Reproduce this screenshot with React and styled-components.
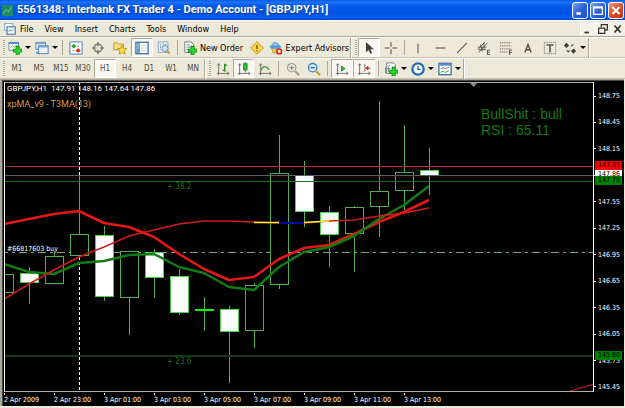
import React, { useState } from 'react';
import styled, { createGlobalStyle } from 'styled-components';

const GlobalStyle = createGlobalStyle`
  * {
    box-sizing: border-box;
  }
  body {
    margin: 0;
    background: #ece9d8;
    font-family: 'DejaVu Sans Condensed', 'Noto Sans', sans-serif;
    font-size: 9px;
    color: #000;
  }
  button {
    margin: 0;
    padding: 0;
    border: none;
    background: none;
    font: inherit;
    color: inherit;
  }
`;

const Window = styled.div`
  display: flex;
  flex-direction: column;
  min-width: 600px;
`;

const TitleBar = styled.header`
  display: flex;
  align-items: center;
  gap: 4px;
  height: 20px;
  padding: 0 1px 0 2px;
  background: linear-gradient(#0a5ce0, #1a72fb 12%, #0458ea 30%, #0053e1 70%, #0560f5 88%, #0142b8);
`;

const Title = styled.h1`
  flex: 1;
  margin: 0;
  font-family: Roboto, 'Noto Sans', sans-serif;
  font-size: 11px;
  line-height: 16px;
  font-weight: 700;
  color: #fff;
  white-space: nowrap;
  text-shadow: 1px 1px 0 #0a3c9c;
`;

const WindowButtons = styled.div`
  display: flex;
  gap: 2px;
`;

const WindowButton = styled.button`
  display: flex;
  width: 16px;
  height: 17px;
  border: 1px solid #fff;
  border-radius: 3px;
  background: ${({ $close }) =>
    $close
      ? 'linear-gradient(135deg, #ef9b7f, #dd4f26 50%, #b93411)'
      : 'linear-gradient(135deg, #7ba4f4, #2c62dd 50%, #1c4bc4)'};
`;

const MenuBar = styled.nav`
  display: flex;
  align-items: center;
  height: 17px;
  padding-left: 4px;
  border-top: 1px solid #fff;
  border-bottom: 1px solid #aca899;
`;

const MenuItems = styled.div`
  display: flex;
  flex: 1;
  gap: 11px;
  padding-left: 4px;
`;

const MenuItem = styled.button`
  font-size: 9px;
  line-height: 14px;
`;

const ChildButton = styled.button`
  display: flex;
  width: 15px;
  height: 13px;
  border-left: 1px solid #fff;
  background: #f4f2e8;
`;

const ToolBar = styled.div`
  display: flex;
  align-items: center;
  height: 21px;
  border-top: 1px solid #fff;
  border-bottom: 1px solid #c5c2b2;
`;

const Grip = styled.span`
  width: 6px;
  height: 16px;
  border-left: 3px solid transparent;
  background: repeating-linear-gradient(#a5a293 0 1px, #f6f4ea 1px 2px) no-repeat 0 0 / 2px 100%;
`;

const Separator = styled.span`
  display: flex;
  justify-content: center;
  width: ${({ $wide }) => ($wide ? 7 : 5)}px;
  height: 15px;
  &::before {
    content: '';
    width: 1px;
    background: #aca899;
  }
`;

const BarEnd = styled.span`
  width: 2px;
  height: 20px;
  border-left: 1px solid #aca899;
  border-right: 1px solid #fff;
`;

const ToolButton = styled.button`
  display: flex;
  align-items: center;
  justify-content: center;
  gap: 3px;
  flex: none;
  width: ${({ $width }) => $width || 22}px;
  height: 19px;
  white-space: nowrap;
  font-size: ${({ $muted }) => ($muted ? 8 : 9)}px;
  color: ${({ $muted }) => ($muted ? '#4c4b44' : '#000')};
  border: 1px solid transparent;
  &[aria-pressed='true'] {
    background: #f8f7f2;
    border-color: #aca899 #fff #fff #aca899;
  }
`;

const Caret = styled.span`
  border: 3px solid transparent;
  border-top-color: #000;
  border-bottom: none;
`;

const ChartFrame = styled.main`
  display: grid;
  grid-template-columns: 1fr 30px;
  margin-right: 1px;
  padding-left: 2px;
  background: #000;
  border: solid #aca899;
  border-width: 1px 0 0 2px;
  box-shadow: inset 1px 1px 0 #4c4b45;
  color: #fff;
  font-size: 7px;
`;

const Plot = styled.svg`
  display: block;
  width: 100%;
  height: 312px;
  margin-top: 1px;
`;

const PriceAxis = styled.div`
  position: relative;
  display: flex;
  flex-direction: column;
  justify-content: space-between;
  height: 312px;
  padding-top: 11px;
`;

const Price = styled.span`
  display: flex;
  align-items: center;
  gap: 2px;
  height: 10px;
  line-height: 10px;
  &::before {
    content: '';
    width: 2px;
    height: 1px;
    background: #fff;
  }
`;

// tags float over the scale at the height of their line
const PriceTag = styled.span`
  position: absolute;
  left: 1px;
  width: 27px;
  padding-left: 3px;
  line-height: 9px;
  background: ${({ $color }) => $color};
  color: #000;
`;

const TimeAxis = styled.div`
  display: flex;
  grid-column: 1 / -1;
  height: 13px;
  overflow: hidden;
`;

const Time = styled.span`
  flex: none;
  width: 50px;
  line-height: 10px;
  white-space: nowrap;
  &::before {
    content: '';
    display: block;
    width: 1px;
    height: 2px;
    background: #fff;
  }
`;

const Icon = ({ size = 14, children }) => (
  <svg width={size} height={size} viewBox="0 0 16 16" fill="none" aria-hidden="true">
    {children}
  </svg>
);

const Plus = () => (
  <>
    <path d="M11 5.500v10.500M5.500 11h10.500" stroke="#0f8a0f" strokeWidth="4.500" />
    <path d="M11 6.500v9M6.500 11h9" stroke="#2fd62f" strokeWidth="2.600" />
  </>
);

const icons = {
  newChart: (
    <>
      <rect x="1" y="1.500" width="11" height="9" fill="#fff" stroke="#5b87b5" />
      <path d="M1 2.500h11" stroke="#5b87b5" strokeWidth="2" />
      <path d="M3 8l2-3 2 2 3-2" stroke="#6aa66a" />
      <Plus />
    </>
  ),
  profiles: (
    <>
      <rect x="1" y="1.500" width="11" height="8" fill="#dbe8f6" stroke="#5b87b5" />
      <rect x="4" y="5.500" width="11" height="9" fill="#e9f2fb" stroke="#4676a8" />
      <path d="M4 6.500h11M1 2.500h11" stroke="#7ba2cc" strokeWidth="2" />
      <path d="M2 12v2.500h3" stroke="#4676a8" />
    </>
  ),
  market: (
    <>
      <rect x="1" y="1" width="14" height="14" rx="1" fill="#fff" stroke="#6d9cc8" strokeWidth="1.500" />
      <path d="M5.500 3l3 3-3 2.500-3-2.500z" fill="#2d9d2d" />
      <path d="M10.500 8l3 3-3 2.500-3-2.500z" fill="#d52c1c" />
      <path d="M9 6h2.500M4.500 11H7" stroke="#9a9a9a" />
    </>
  ),
  target: (
    <>
      <circle cx="8" cy="8" r="4.500" stroke="#77766e" strokeWidth="1.500" />
      <path d="M8 1v5M8 10v5M1 8h5M10 8h5" stroke="#65645e" strokeWidth="1.400" />
    </>
  ),
  folderStar: (
    <>
      <path d="M1 10V2h4l1 1.500h6V10z" fill="#f6dc7b" stroke="#b99531" />
      <path d="M10.500 5l1.600 3.300 3.600.500-2.600 2.500.700 3.600-3.300-1.700L7.200 15l.700-3.700-2.600-2.500 3.600-.500z" fill="#ffe14d" stroke="#b48a14" />
    </>
  ),
  navigator: (
    <>
      <rect x="1" y="1.500" width="14" height="13" fill="#fff" stroke="#3e6ea6" strokeWidth="1.500" />
      <rect x="2" y="2.500" width="3.500" height="11" fill="#5a91d0" />
      <path d="M7 5h7M7 8h7M7 11h7" stroke="#b8c9dc" />
      <path d="M3 5h1.500M3 8h1.500" stroke="#fff" />
    </>
  ),
  tester: (
    <>
      <rect x="1.500" y="1" width="11" height="12" fill="#eaf1f8" stroke="#86a5c3" />
      <path d="M4 3v7M7 3v5M10 3v5" stroke="#8095aa" strokeDasharray="2 1" />
      <circle cx="9" cy="8.500" r="3.500" fill="#cfe5f7" stroke="#618bb0" />
      <path d="M11.500 11l3 3.500" stroke="#c59632" strokeWidth="2" />
    </>
  ),
  order: (
    <>
      <path d="M2 1h7l3 3v9H2z" fill="#fff" stroke="#65747f" />
      <path d="M4 4.500h4M4 7h6M4 9.500h3" stroke="#687782" />
      <Plus />
    </>
  ),
  alert: (
    <>
      <path d="M8 .8L15.200 8 8 15.200.8 8z" fill="#f8d749" stroke="#b28d19" strokeLinejoin="round" />
      <path d="M8 4.500v4.500M8 10.500v1.500" stroke="#6e5309" strokeWidth="1.600" />
    </>
  ),
  expert: (
    <>
      <path d="M3 8h9l-1 5.500H5z" fill="#f3cc56" stroke="#b18928" />
      <ellipse cx="7.500" cy="6.500" rx="7" ry="2.500" fill="#5aa2d8" />
      <path d="M3.500 6c0-6 8-6 8 0z" fill="#8cc6ec" stroke="#468abd" />
      <rect x="8.500" y="8.500" width="7" height="7" rx="2" fill="#d6281c" />
      <rect x="10.500" y="10.500" width="3" height="3" fill="#fff" />
    </>
  ),
  cursor: <path d="M4.500 1v12l3-2.800 2 4.500 2-.900-2-4.300h4z" fill="#3f3e39" />,
  cross: <path d="M8 1v5.500M8 9.500V15M1 8h5.500M9.500 8H15" stroke="#55544d" strokeWidth="1.200" />,
  vline: <path d="M8 3v11" stroke="#55544d" strokeWidth="1.200" />,
  hline: <path d="M3 8h11" stroke="#55544d" strokeWidth="1.200" />,
  trend: <path d="M2.500 13.500l11-11" stroke="#55544d" strokeWidth="1.200" />,
  channel: (
    <>
      <path d="M1 10L9 1M2 13L12 2M1 7h10M2 10h8M4 4l2 8M8 2v8" stroke="#55544d" />
      <path d="M15 10.500h-3v5h3M12 13h2.500" stroke="#3f3e39" />
    </>
  ),
  fibo: (
    <>
      <path d="M1 2h13M1 5.500h13M1 9h13M1 12.500h9" stroke="#55544d" strokeDasharray="1.500 1" />
      <path d="M15 10.500h-3v5.500M12 13h2.500" stroke="#3f3e39" />
    </>
  ),
  letter: <path d="M4.500 13L8 4l3.500 9M6 10h4.500" stroke="#55544d" strokeWidth="1.600" />,
  label: (
    <>
      <rect x="1.500" y="1.500" width="13" height="13" stroke="#77766e" strokeDasharray="1.500 1" />
      <path d="M4 4.500h8M8 4.500V13" stroke="#55544d" strokeWidth="1.800" />
    </>
  ),
  shapes: (
    <>
      <path d="M4 2l3 3-3 3-3-3z" fill="#3f3e39" />
      <path d="M12 8.500l3 3-3 3-3-3z" fill="#3f3e39" />
      <path d="M4 10.500l2 2 1.500-2M9 6l3-2" stroke="#55544d" strokeWidth="1.200" />
    </>
  ),
  bars: (
    <>
      <path d="M3 2v13M1 13h14M1.500 4L3 2l1.500 2M13 11.500l2 1.500-2 1.500" stroke="#66655d" />
      <path d="M10 2v9M7.500 9.500H10M10 3.500h2.500" stroke="#178a17" strokeWidth="1.500" />
    </>
  ),
  candles: (
    <>
      <path d="M3 2v13M1 13h14M1.500 4L3 2l1.500 2M13 11.500l2 1.500-2 1.500" stroke="#66655d" />
      <path d="M9.500 0v12" stroke="#178a17" />
      <rect x="7.500" y="2" width="4" height="7" fill="#2fc12f" stroke="#178a17" />
    </>
  ),
  line: (
    <>
      <path d="M3 2v13M1 13h14M1.500 4L3 2l1.500 2M13 11.500l2 1.500-2 1.500" stroke="#66655d" />
      <path d="M3 10c3-6 6-6 10-1" stroke="#3c983c" strokeWidth="1.400" />
    </>
  ),
  zoomIn: (
    <>
      <circle cx="6.500" cy="6.500" r="4.800" fill="#ecebe3" stroke="#a09f96" strokeWidth="1.400" />
      <path d="M4 6.500h5M6.500 4v5" stroke="#8c8b83" strokeWidth="1.300" />
      <path d="M10.500 10.500L15 15" stroke="#a09f96" strokeWidth="2.500" />
    </>
  ),
  zoomOut: (
    <>
      <circle cx="6.500" cy="6.500" r="4.800" fill="#d9edfb" stroke="#3c82bd" strokeWidth="1.500" />
      <path d="M4 6.500h5" stroke="#2768a4" strokeWidth="1.500" />
      <path d="M10.500 10.500L15 15" stroke="#cf9f2e" strokeWidth="2.500" />
    </>
  ),
  scroll: (
    <>
      <path d="M3 2v13M1 13h14M1.500 4L3 2l1.500 2M13 11.500l2 1.500-2 1.500" stroke="#66655d" />
      <path d="M7.500 4.500l4 3-4 3z" fill="#58bd58" stroke="#178a17" />
    </>
  ),
  shift: (
    <>
      <path d="M3 2v13M1 13h14M1.500 4L3 2l1.500 2M13 11.500l2 1.500-2 1.500M9 2v9" stroke="#66655d" />
      <path d="M10 7l2.500-2v4zM12 7h3.500" fill="#b32b1c" stroke="#b32b1c" />
    </>
  ),
  indicators: (
    <>
      <path d="M3 1h8l2 2v10H3z" fill="#fff" stroke="#65747f" />
      <path d="M2 6v7M5 11V6c0-2 1-2 2-2M4 7.500h3" stroke="#61707b" />
      <Plus />
    </>
  ),
  clock: (
    <>
      <circle cx="8" cy="8" r="6.500" fill="#f1f8ff" stroke="#226db5" strokeWidth="2.600" />
      <path d="M8 4.500V8.500h3" stroke="#33506c" strokeWidth="1.300" />
    </>
  ),
  template: (
    <>
      <rect x="1" y="1.500" width="14" height="13" fill="#fff" stroke="#3e6ea6" strokeWidth="1.500" />
      <path d="M1 3h14" stroke="#5a91d0" strokeWidth="2.500" />
      <path d="M3 8l3-1.500 2 1L12.500 6" stroke="#8b5f4d" />
      <path d="M3 12l3-1.500 2 1.500 4.500-2" stroke="#2d9d2d" />
    </>
  )
};

const menus = ['File', 'View', 'Insert', 'Charts', 'Tools', 'Window', 'Help'];
const periods = ['M1', 'M5', 'M15', 'M30', 'H1', 'H4', 'D1', 'W1', 'MN'];

// the blank step is where the current price tag sits
const prices = [
  '148.75', '148.45', '148.15', '', '147.55', '147.25',
  '146.95', '146.65', '146.35', '146.05', '145.75', '145.45'
];

const tags = [
  { price: '147.86', top: 90, color: '#fff' },
  { price: '147.95', top: 81, color: '#f00' },
  { price: '147.79', top: 96, color: '#008000' },
  { price: '145.80', top: 271, color: '#008000' }
];

const times = [
  '2 Apr 2009', '2 Apr 23:00', '3 Apr 01:00', '3 Apr 03:00', '3 Apr 05:00',
  '3 Apr 07:00', '3 Apr 09:00', '3 Apr 11:00', '3 Apr 13:00'
];

// one bar every 25px: high, body top, body bottom, low, falling
const candles = [
  [188, 193, 211, 222, false],
  [186, 192, 201, 222, true],
  [170, 175, 202, 202, false],
  [94, 153, 174, 174, false],
  [145, 154, 215, 219, true],
  [170, 170, 216, 253, false],
  [168, 171, 196, 216, true],
  [188, 195, 231, 233, true],
  [216, 229, 229, 249, false],
  [225, 228, 250, 301, true],
  [202, 204, 249, 266, false],
  [54, 92, 203, 207, false],
  [80, 94, 130, 145, true],
  [125, 131, 153, 185, true],
  [125, 126, 152, 190, false],
  [20, 110, 125, 155, false],
  [44, 91, 109, 128, false],
  [67, 89, 94, 113, true]
];

const slowRed = [143, 138, 133, 130, 142, 146, 156, 173, 188, 199, 196, 178, 167, 164, 153, 141, 131, 119];
const fastGreen = [183, 191, 193, 182, 180, 174, 173, 186, 192, 206, 209, 186, 171, 166, 155, 138, 124, 105];
const trendLine = [218, 203, 189, 176, 166, 155, 149, 143, 140, 140, 141, 142, 142, 140, 139, 135, 132, 127];

const toPoints = values => values.map((y, i) => `${i * 25},${y}`).join(' ');

const Candle = ({ index, bar: [high, top, bottom, low, falling] }) => {
  const x = index * 25;
  const doji = top === bottom;
  return (
    <g shapeRendering="crispEdges">
      <path d={`M${x + 0.5} ${high}V${low + 1}`} stroke="#4fae4f" />
      {doji ? (
        <path d={`M${x - 9} ${top}h19`} stroke="#0f0" strokeWidth="2" />
      ) : (
        <rect
          x={x - 8.5}
          y={top + 0.5}
          width="18"
          height={bottom - top}
          fill={falling ? '#fff' : '#000'}
          stroke={falling ? '#4fd04f' : '#4fae4f'}
        />
      )}
    </g>
  );
};

const Chart = () => (
  <Plot role="img" aria-label="GBPJPY hourly candles">
    <path d="M75.500 1V310" stroke="#fff" strokeDasharray="3 2" />
    <line x1="0" x2="100%" y1="171.5" y2="171.5" stroke="#7da57d" strokeDasharray="8 4 3 4" strokeDashoffset="4" />
    {candles.map((bar, i) => (
      <Candle key={i} index={i} bar={bar} />
    ))}
    <g shapeRendering="crispEdges">
      <line x1="0" x2="100%" y1="85.5" y2="85.5" stroke="#b03030" />
      <line x1="0" x2="100%" y1="94.5" y2="94.5" stroke="#5c5f68" />
      <line x1="0" x2="100%" y1="100.5" y2="100.5" stroke="#1f6f1f" />
      <line x1="0" x2="100%" y1="275" y2="275" stroke="#173817" strokeWidth="2" />
    </g>
    <g strokeLinejoin="round">
      <polyline points={toPoints(slowRed)} fill="none" stroke="#e81818" strokeWidth="2.500" />
      <polyline points={toPoints(fastGreen)} fill="none" stroke="#147a14" strokeWidth="2.500" />
      <polyline points={toPoints(trendLine)} fill="none" stroke="#d01c1c" strokeWidth="1.500" />
      <path d="M250 141.500h25M300 141.500l25-1.500" stroke="#ffee3c" strokeWidth="1.500" />
      <path d="M275 142h25" stroke="#0808a0" strokeWidth="2" />
      <path d="M563 311l27-8" stroke="#b02626" strokeWidth="1.300" />
    </g>
    <path d="M466 2h7l-3.500 4z" fill="#8794a0" />
    <g shapeRendering="crispEdges">
      <line x1="0" x2="100%" y1="1.5" y2="1.5" stroke="#aaa" />
      <line x1="0" x2="100%" y1="310.5" y2="310.5" stroke="#aaa" />
      <path d="M.5 1V311" stroke="#fff" />
      <svg x="100%" overflow="visible">
        <path d="M-.5 1V311" stroke="#fff" />
      </svg>
    </g>
    <g fontSize="7">
      <text x="3" y="10" fill="#fff" fontFamily="Roboto, sans-serif" fontSize="8">GBPJPY,H1{'\u00a0 '}147.91 148.16 147.64 147.86</text>
      <text x="3" y="26" fill="#d89850" fontFamily="Roboto, sans-serif" fontSize="9">xpMA_v9 - T3MA(13)</text>
      <text x="3" y="170" fill="#fff">#66817603 buy</text>
      <text x="163" y="108" fill="#1f6f1f" fontSize="8">+ 38.2</text>
      <text x="163" y="283" fill="#1f6f1f" fontSize="8">+ 23.6</text>
    </g>
    <g fill="#147a14" fontFamily="Liberation Sans, sans-serif" fontSize="14">
      <text x="477" y="38">BullShit : bull</text>
      <text x="477" y="54">RSI : 65.11</text>
    </g>
  </Plot>
);

const Tool = ({ icon, label, text, drop, ...rest }) => (
  <ToolButton type="button" aria-label={text || label} $width={drop ? 27 : undefined} {...rest}>
    <Icon>{icons[icon]}</Icon>
    {text}
    {drop && <Caret />}
  </ToolButton>
);

export default function App() {
  const [period, setPeriod] = useState('H1');

  return (
    <>
      <GlobalStyle />
      <Window>
        <TitleBar>
          <Icon size={11}>
            <rect width="16" height="16" rx="1" fill="#1d8a63" />
            <path d="M2 12l4-5 3 3 5-7" stroke="#4fb588" strokeWidth="2" />
          </Icon>
          <Title>5561348: Interbank FX Trader 4 - Demo Account - [GBPJPY,H1]</Title>
          <WindowButtons>
            <WindowButton type="button" aria-label="Minimize">
              <Icon><path d="M4 12h5" stroke="#fff" strokeWidth="3" /></Icon>
            </WindowButton>
            <WindowButton type="button" aria-label="Maximize">
              <Icon><path d="M3 4.500h10V13H3zM3 5.500h10" stroke="#fff" strokeWidth="1.600" /></Icon>
            </WindowButton>
            <WindowButton type="button" aria-label="Close" $close>
              <Icon><path d="M4 4.500l8 8M12 4.500l-8 8" stroke="#fff" strokeWidth="2.400" /></Icon>
            </WindowButton>
          </WindowButtons>
        </TitleBar>

        <MenuBar>
          <Icon size={12}>
            <rect x="1" y="1" width="11" height="9" fill="#fff" stroke="#5b87b5" />
            <rect x="4" y="5" width="11" height="10" fill="#eef5fc" stroke="#3f70a5" strokeWidth="1.400" />
            <path d="M6 12l2-3 2 2 3-3" stroke="#5b87b5" />
          </Icon>
          <MenuItems>
            {menus.map(name => (
              <MenuItem type="button" key={name}>{name}</MenuItem>
            ))}
          </MenuItems>
          <ChildButton type="button" aria-label="Minimize chart">
            <Icon><path d="M4 12h5" stroke="#333" strokeWidth="2" /></Icon>
          </ChildButton>
          <ChildButton type="button" aria-label="Restore chart">
            <Icon><path d="M6 6V3h7v6h-3M3 7h7v6H3z" stroke="#333" strokeWidth="1.400" /></Icon>
          </ChildButton>
          <ChildButton type="button" aria-label="Close chart">
            <Icon><path d="M4 4l7 8M11 4l-7 8" stroke="#333" strokeWidth="2" /></Icon>
          </ChildButton>
        </MenuBar>

        <ToolBar role="toolbar" aria-label="Standard">
          <Grip />
          <Tool icon="newChart" label="New chart" drop />
          <Tool icon="profiles" label="Profiles" drop />
          <Separator />
          <Tool icon="market" label="Market Watch" />
          <Tool icon="target" label="Data Window" />
          <Tool icon="folderStar" label="Favorites" />
          <Tool icon="navigator" label="Navigator" aria-pressed="true" />
          <Tool icon="tester" label="Strategy Tester" />
          <Separator />
          <Tool icon="order" text="New Order" $width={66} />
          <Tool icon="alert" label="MetaEditor" />
          <Tool icon="expert" text="Expert Advisors" $width={82} />
          <BarEnd />
          <Grip />
          <Tool icon="cursor" label="Cursor" aria-pressed="true" />
          <Tool icon="cross" label="Crosshair" />
          <Separator />
          <Tool icon="vline" label="Vertical line" />
          <Tool icon="hline" label="Horizontal line" />
          <Tool icon="trend" label="Trendline" />
          <Tool icon="channel" label="Channel" />
          <Tool icon="fibo" label="Fibonacci" />
          <Tool icon="letter" label="Text" />
          <Tool icon="label" label="Text label" />
          <Tool icon="shapes" label="Arrows" drop />
          <BarEnd />
        </ToolBar>

        <ToolBar role="toolbar" aria-label="Charts">
          <Grip />
          {periods.map(name => (
            <ToolButton
              type="button"
              key={name}
              $muted
              aria-pressed={name === period}
              onClick={() => setPeriod(name)}
            >
              {name}
            </ToolButton>
          ))}
          <BarEnd />
          <Grip />
          <Tool icon="bars" label="Bar chart" $width={21} />
          <Tool icon="candles" label="Candlesticks" aria-pressed="true" $width={21} />
          <Tool icon="line" label="Line chart" $width={21} />
          <Separator $wide />
          <Tool icon="zoomIn" label="Zoom in" $width={21} />
          <Tool icon="zoomOut" label="Zoom out" $width={21} />
          <Separator $wide />
          <Tool icon="scroll" label="Auto scroll" aria-pressed="true" />
          <Tool icon="shift" label="Chart shift" aria-pressed="true" />
          <Separator $wide />
          <Tool icon="indicators" label="Indicators" drop />
          <Tool icon="clock" label="Periods" drop />
          <Tool icon="template" label="Templates" drop />
          <BarEnd />
        </ToolBar>

        <ChartFrame>
          <Chart />
          <PriceAxis>
            {prices.map((price, i) => (
              <Price key={i}>{price}</Price>
            ))}
            {tags.map(({ price, top, color }) => (
              <PriceTag key={price} $color={color} style={{ top }}>{price}</PriceTag>
            ))}
          </PriceAxis>
          <TimeAxis>
            {times.map(time => (
              <Time key={time}>{time}</Time>
            ))}
          </TimeAxis>
        </ChartFrame>
      </Window>
    </>
  );
}
